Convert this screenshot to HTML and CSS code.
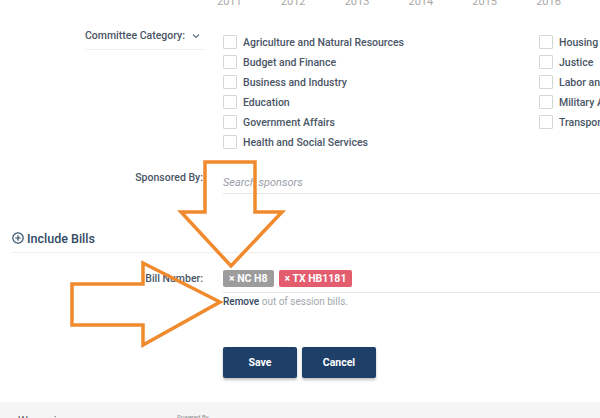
FILE: index.html
```html
<!DOCTYPE html>
<html>
<head>
<meta charset="utf-8">
<link rel="stylesheet" href="styles.css">
</head>
<body>
<div class="page">
  <div class="years">
    <span>2011</span><span>2012</span><span>2013</span><span>2014</span><span>2015</span><span>2016</span>
  </div>

  <div class="row committee">
    <div class="cat-label">Committee Category:
      <svg class="chev" width="8" height="6" viewBox="0 0 8 6"><path d="M1 1.5 L4 4.5 L7 1.5" fill="none" stroke="#5a6b80" stroke-width="1.1"/></svg>
    </div>
    <div class="checks">
      <div class="col">
        <label class="chk"><span class="box"></span>Agriculture and Natural Resources</label>
        <label class="chk"><span class="box"></span>Budget and Finance</label>
        <label class="chk"><span class="box"></span>Business and Industry</label>
        <label class="chk"><span class="box"></span>Education</label>
        <label class="chk"><span class="box"></span>Government Affairs</label>
        <label class="chk"><span class="box"></span>Health and Social Services</label>
      </div>
      <div class="col col2">
        <label class="chk"><span class="box"></span>Housing and Urban Affairs</label>
        <label class="chk"><span class="box"></span>Justice</label>
        <label class="chk"><span class="box"></span>Labor and Employment</label>
        <label class="chk"><span class="box"></span>Military Affairs</label>
        <label class="chk"><span class="box"></span>Transportation</label>
      </div>
    </div>
  </div>

  <div class="row sponsor">
    <div class="label">Sponsored By:</div>
    <div class="field"><span class="placeholder">Search sponsors</span></div>
  </div>

  <div class="section">
    <svg class="plus" width="12" height="12" viewBox="0 0 12 12"><circle cx="6" cy="6" r="5.2" fill="none" stroke="#2f4a66" stroke-width="1.2"/><path d="M6 3.2 V8.8 M3.2 6 H8.8" stroke="#2f4a66" stroke-width="1.2"/></svg>
    <span>Include Bills</span>
  </div>

  <div class="row bills">
    <div class="label">Bill Number:</div>
    <div class="field tags">
      <span class="tag gray">× NC H8</span>
      <span class="tag red">× TX HB1181</span>
    </div>
  </div>
  <div class="row remove-row">
    <div class="label"></div>
    <div class="remove"><b>Remove</b> out of session bills.</div>
  </div>

  <div class="row actions">
    <div class="label"></div>
    <div class="buttons">
      <button class="btn">Save</button>
      <button class="btn">Cancel</button>
    </div>
  </div>

  <div class="footer">
    <span class="f1">Wyngs.io</span>
    <span class="f2">Powered By</span>
  </div>

  <svg class="arrows" width="600" height="418" viewBox="0 0 600 418">
    <path d="M205 162 H255 V212 H282 L231 266 L181 212 H205 Z" fill="none" stroke="#f08a2c" stroke-width="3.5" stroke-linejoin="miter"/>
    <path d="M72 284 H143 V263 L220 302 L143 345 V325 H72 Z" fill="none" stroke="#f08a2c" stroke-width="3.5" stroke-linejoin="miter"/>
  </svg>
</div>
</body>
</html>
```
FILE: styles.css
```css
html, body {
  margin: 0;
  padding: 0;
  background: #ffffff;
}
body {
  font-family: Roboto, "Liberation Sans", Arial, sans-serif;
  color: #4a5566;
  width: 600px;
  height: 418px;
  overflow: hidden;
}
.page {
  position: relative;
  width: 600px;
  height: 418px;
  overflow: hidden;
}
.years {
  display: flex;
  margin-left: 217px;
  margin-top: -5px;
  height: 14px;
  font-size: 11px;
  color: #a8a8a8;
}
.years span {
  width: 66px;
  line-height: 14px;
}
.row {
  display: flex;
  padding-left: 85px;
}
.label {
  width: 118px;
  text-align: right;
  font-size: 10.5px;
  font-weight: 500;
  color: #4a5566;
  flex-shrink: 0;
}
.committee {
  margin-top: 19px;
}
.cat-label {
  width: 120px;
  height: 22px;
  padding-top: 2px;
  border-bottom: 1px solid #eeeeee;
  font-size: 10.5px;
  font-weight: 500;
  color: #4a5566;
  line-height: 12px;
  box-sizing: border-box;
  flex-shrink: 0;
}
.chev {
  margin-left: 4px;
  vertical-align: middle;
}
.checks {
  display: flex;
  margin-left: 18px;
  padding-top: 4px;
}
.col {
  width: 316px;
  display: flex;
  flex-direction: column;
}
.col2 {
  width: 80px;
  overflow: hidden;
  white-space: nowrap;
}
.chk {
  display: flex;
  align-items: center;
  height: 20px;
  font-size: 10.5px;
  font-weight: 500;
  color: #4a5566;
  white-space: nowrap;
}
.box {
  width: 12px;
  height: 12px;
  border: 1px solid #d6d6d6;
  border-radius: 1px;
  margin-right: 6px;
  flex-shrink: 0;
}
.sponsor {
  margin-top: 19px;
}
.sponsor .label {
  line-height: 14px;
}
.field {
  margin-left: 20px;
  flex: 1;
  border-bottom: 1px solid #e6e6e6;
}
.sponsor .field {
  height: 22px;
}
.placeholder {
  font-size: 11px;
  font-style: italic;
  color: #9aa0a8;
  line-height: 14px;
}
.section {
  display: flex;
  align-items: center;
  height: 16px;
  margin-top: 36px;
  margin-left: 12px;
  padding-bottom: 6px;
  border-bottom: 1px solid #ededed;
  font-size: 12.5px;
  font-weight: 500;
  color: #2f4a66;
}
.plus {
  margin-right: 3px;
}
.bills {
  margin-top: 17px;
}
.bills .label {
  line-height: 17px;
}
.tags {
  display: flex;
  gap: 5px;
  height: 22px;
}
.tag {
  display: inline-block;
  height: 17px;
  line-height: 17px;
  padding: 0 6px;
  border-radius: 2px;
  font-size: 10.5px;
  font-weight: 700;
  color: #ffffff;
}
.gray {
  background: #9c9c9c;
}
.red {
  background: #e35d6f;
}
.remove-row {
  margin-top: 3px;
}
.remove {
  margin-left: 20px;
  font-size: 10px;
  line-height: 12px;
  color: #a3a8ae;
}
.remove b {
  font-weight: 500;
  color: #34465c;
}
.actions {
  margin-top: 39px;
}
.buttons {
  display: flex;
  gap: 5px;
  margin-left: 20px;
}
.btn {
  width: 74px;
  height: 31px;
  border: none;
  border-radius: 2px;
  background: #1e4068;
  color: #ffffff;
  font-family: Roboto, "Liberation Sans", Arial, sans-serif;
  font-size: 10.5px;
  font-weight: 700;
  box-shadow: 0 2px 3px rgba(0,0,0,0.25);
  padding: 0;
}
.footer {
  margin-top: 24px;
  height: 20px;
  background: #f5f5f5;
  position: relative;
}
.f1 {
  position: absolute;
  left: 18px;
  top: 12px;
  font-size: 11px;
  color: #555;
}
.f2 {
  position: absolute;
  left: 177px;
  top: 11px;
  font-size: 6px;
  color: #888;
}
.arrows {
  position: absolute;
  left: 0;
  top: 0;
  pointer-events: none;
}
```
